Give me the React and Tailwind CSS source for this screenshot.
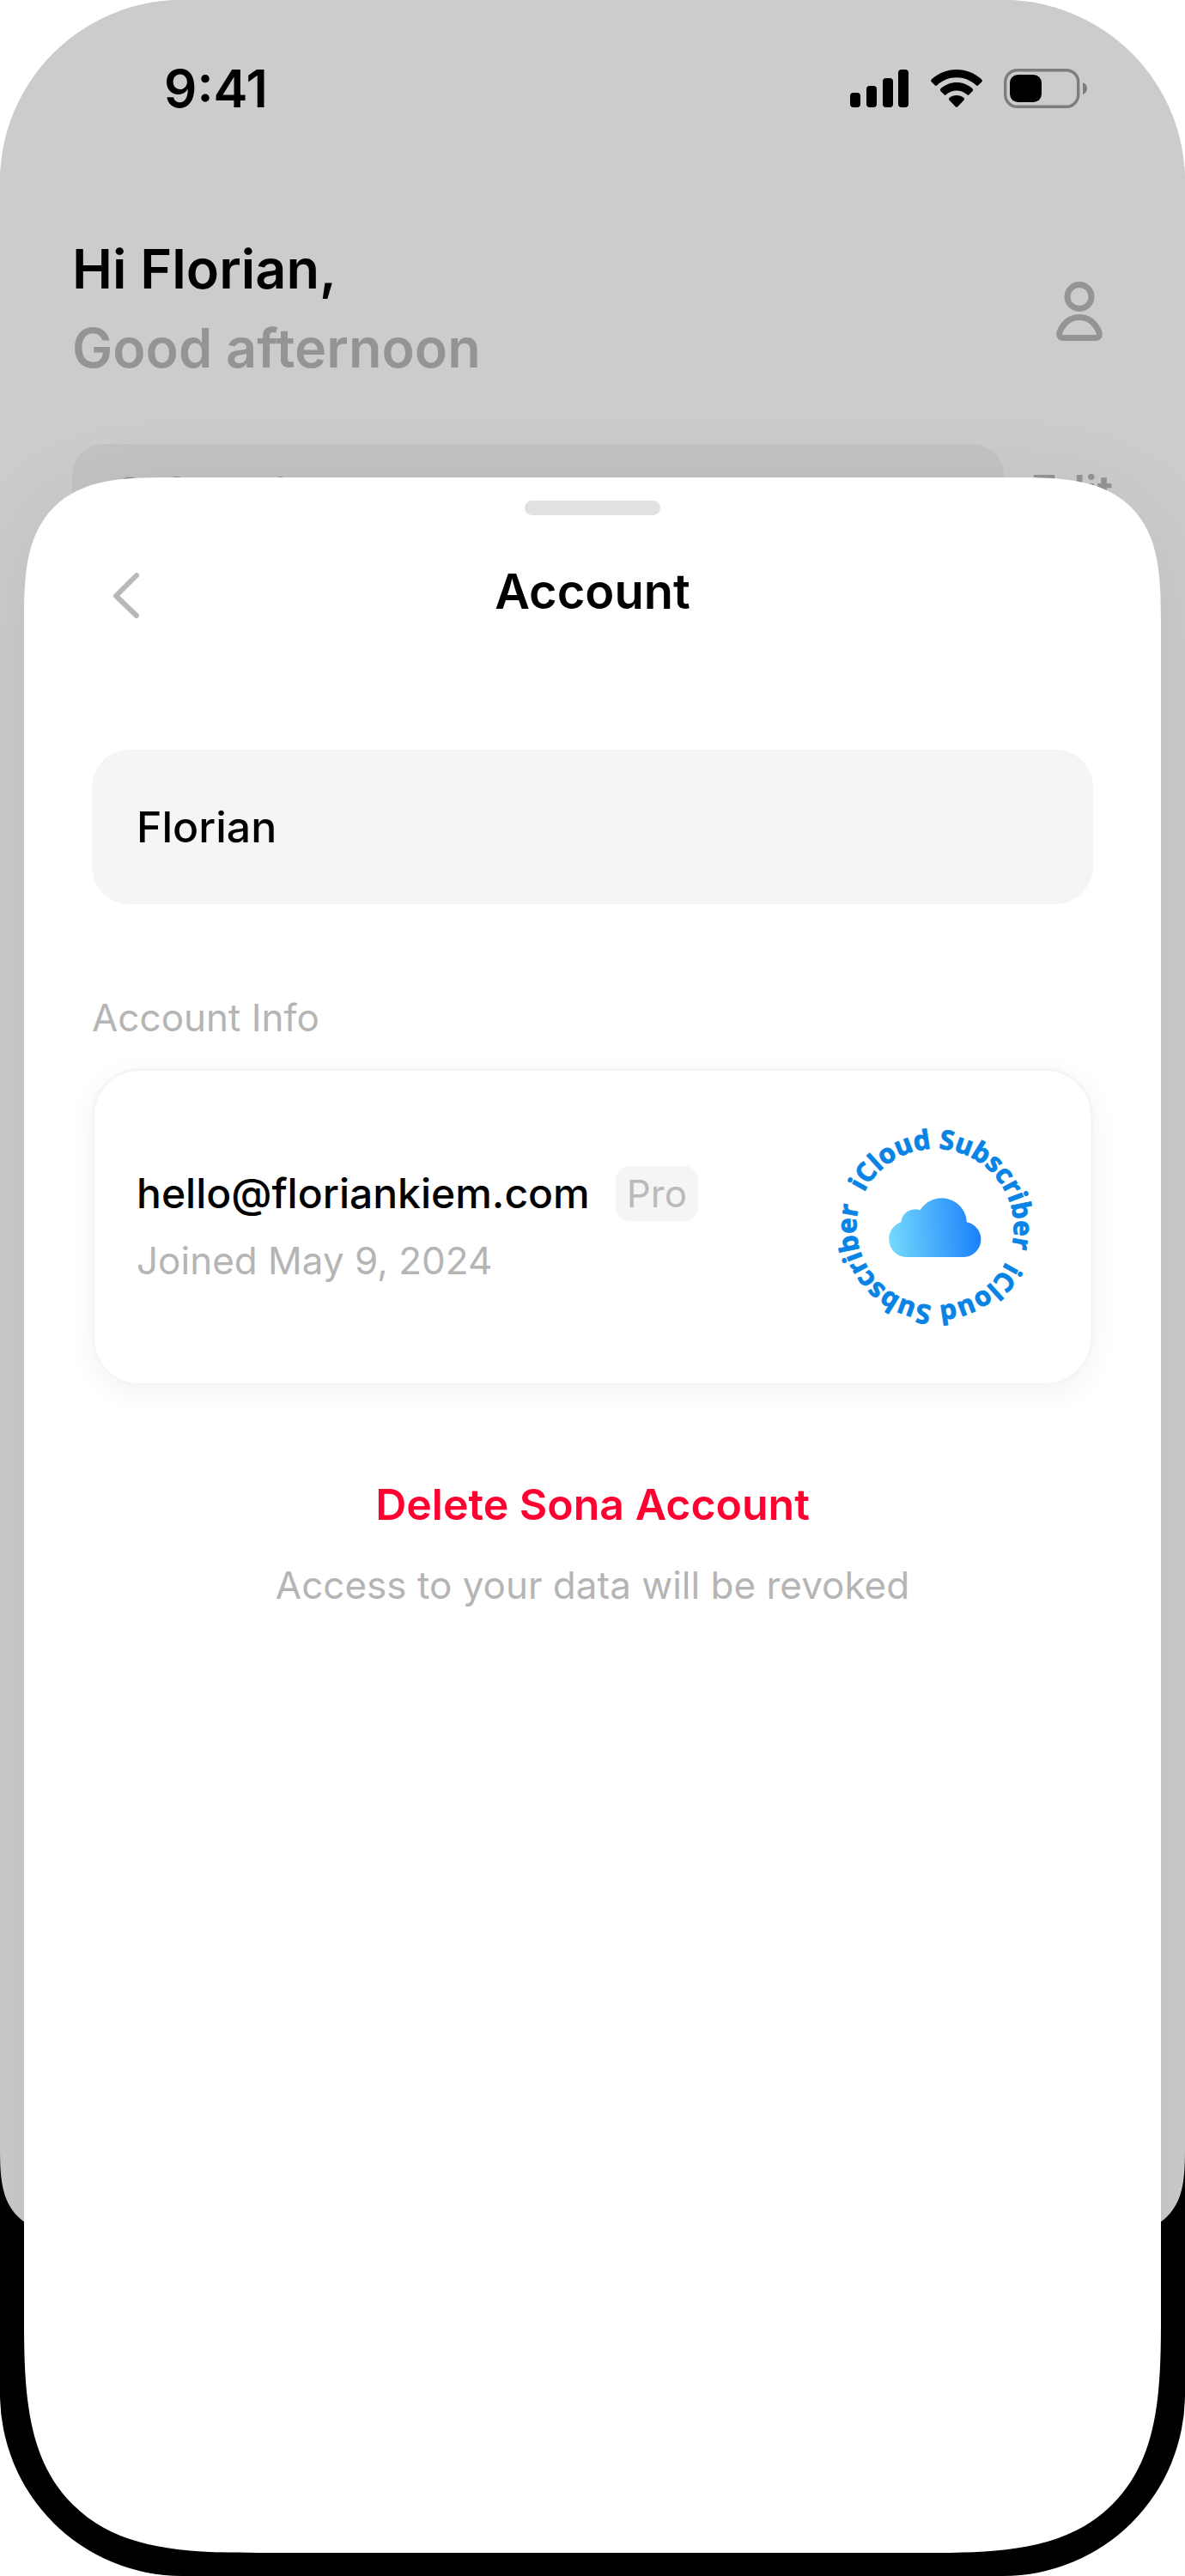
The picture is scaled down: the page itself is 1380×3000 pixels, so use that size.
import React from "react";

function SignalIcon() {
  return (
    <svg width="69" height="46" viewBox="0 0 69 46" aria-hidden="true">
      <rect x="0" y="28" width="12" height="17" rx="4" />
      <rect x="19" y="20" width="12" height="25" rx="4" />
      <rect x="38" y="11" width="12" height="34" rx="4" />
      <rect x="56" y="1" width="12" height="44" rx="4" />
    </svg>
  );
}

function WifiIcon() {
  return (
    <svg width="60" height="46" viewBox="0 0 60 46" aria-hidden="true">
      <path d="M30 1C41 1 51 5.200 59 12.200Q60.500 13.800 59.400 15.200L55 19.600Q54 20.400 53 19.500C46.500 13.500 38.500 10.300 30 10.300S13.500 13.500 7 19.500Q6 20.400 5 19.600L.6 15.200Q-.5 13.800 1 12.200C9 5.200 19 1 30 1Z" />
      <path d="M30 16C37 16 43.500 18.700 48.500 23.200Q49.800 24.600 48.700 25.900L44.500 30.300Q43.400 31.300 42.300 30.300C38.800 27.200 34.600 25.500 30 25.500S21.200 27.200 17.700 30.300Q16.600 31.300 15.500 30.300L11.300 25.900Q10.200 24.600 11.500 23.200C16.500 18.700 23 16 30 16Z" />
      <path d="M30 31C33.300 31 36.200 32.200 38.500 34.100Q39.600 35.200 38.600 36.400L31 44.400Q30 45.300 29 44.400L21.400 36.400Q20.400 35.200 21.500 34.100C23.800 32.200 26.700 31 30 31Z" />
    </svg>
  );
}

function BatteryIcon() {
  return (
    <svg width="98" height="46" viewBox="0 0 98 46" aria-hidden="true">
      <rect x="1.700" y="1.700" width="85" height="42.600" rx="14" fill="none" stroke="#7d7d7d" strokeWidth="3.400" />
      <rect x="7" y="7" width="37" height="32" rx="9.500" />
      <path d="M92 16C95.300 17.500 97 20 97 23S95.300 28.500 92 30Z" fill="#7d7d7d" />
    </svg>
  );
}

function PersonIcon() {
  return (
    <svg width="54" height="76" viewBox="0 0 54 76" fill="none" stroke="#949494" strokeWidth="7" aria-hidden="true">
      <circle cx="27" cy="24.500" r="14" />
      <path d="M27 48.500C38 48.500 45 55 49.500 64.500Q52 72.500 45.500 72.500H8.500Q2 72.500 4.500 64.500C9 55 16 48.500 27 48.500Z" />
    </svg>
  );
}

function SubscriberSeal() {
  return (
    <svg width="240" height="240" viewBox="0 0 240 240" className="overflow-visible" role="img" aria-label="iCloud Subscriber">
      <defs>
        <linearGradient id="cloud" gradientUnits="userSpaceOnUse" x1="65" y1="125" x2="174" y2="118">
          <stop offset="0" stopColor="#74dafc" />
          <stop offset="1" stopColor="#1a7ffb" />
        </linearGradient>
        <path id="arcTop" d="M37.300 79.700A92 92 0 0 1 202.700 160.300A92 92 0 0 1 37.300 79.700" />
        <path id="arcBottom" d="M202.700 160.300A92 92 0 0 1 37.300 79.700A92 92 0 0 1 202.700 160.300" />
      </defs>
      <g
        className="font-['Open_Sans'] text-[31px] font-bold"
        fill="#0a84e4"
        stroke="#0a84e4"
        strokeWidth="1"
        strokeLinejoin="round"
      >
        <text><textPath href="#arcTop">iCloud Subscriber</textPath></text>
        <text><textPath href="#arcBottom">iCloud Subscriber</textPath></text>
      </g>
      <path
        fill="url(#cloud)"
        d="M86 155A21 21 0 0 1 80.300 114.200A16.600 16.600 0 0 1 102.500 100.300A29.300 29.300 0 0 1 156.800 114.200A20.600 20.600 0 0 1 153.500 155Z"
      />
    </svg>
  );
}

function HomeScreen() {
  return (
    <div className="col-start-1 row-start-1 mb-[398px] overflow-hidden rounded-b-[80px] bg-[#cccccc] px-[84px] supports-[corner-shape:squircle]:rounded-b-[100px] supports-[corner-shape:squircle]:[corner-shape:superellipse(1.58)]">
      <div className="mt-[73px] flex h-[60px] items-center justify-between pr-[29px] pl-[107px]">
        <time className="text-[60px] leading-[60px] font-semibold">9:41</time>
        <div className="flex items-center gap-[25px]">
          <SignalIcon />
          <WifiIcon />
          <BatteryIcon />
        </div>
      </div>
      <header className="mt-[134px] flex items-center justify-between">
        <h1 className="text-[63px] leading-[92px] font-semibold">
          Hi Florian,
          <span className="block text-[#949494]">Good afternoon</span>
        </h1>
        <button type="button" aria-label="Profile" className="mr-[12px]">
          <PersonIcon />
        </button>
      </header>
      <div className="mt-[66px] flex items-center gap-[31px]">
        <label className="flex h-[112px] flex-1 items-center gap-[16px] rounded-[36px] bg-[#c3c3c3] pl-[52px]">
          <svg width="40" height="40" viewBox="0 0 40 40" fill="none" stroke="#8f8f8f" strokeWidth="5" aria-hidden="true">
            <circle cx="16" cy="17" r="13" />
            <path d="M26 27L37 38" strokeLinecap="round" />
          </svg>
          <input
            type="search"
            placeholder="Search"
            aria-label="Search"
            className="w-full bg-transparent text-[48px] leading-[60px] outline-none placeholder:text-[#8f8f8f]"
          />
        </label>
        <button type="button" className="text-[52px] leading-[60px] font-semibold text-[#949494]">
          Edit
        </button>
      </div>
    </div>
  );
}

function AccountSheet() {
  return (
    <section
      role="dialog"
      aria-labelledby="sheet-title"
      className="z-10 col-start-1 row-start-1 mx-7 mt-[556px] mb-[27px] flex flex-col rounded-t-[120px] rounded-b-[195px] bg-white px-[79px] shadow-[0_20px_110px_rgba(0,0,0,0.08)] supports-[corner-shape:squircle]:rounded-t-[168px] supports-[corner-shape:squircle]:rounded-b-[273px] supports-[corner-shape:squircle]:[corner-shape:superellipse(1.58)]"
    >
      <div className="mt-[27px] h-[17px] w-[158px] self-center rounded-full bg-[#e2e2e2]" />
      <header className="mt-[53px] grid grid-cols-[72px_1fr_72px] items-center">
        <button type="button" aria-label="Back">
          <svg width="72" height="72" viewBox="0 0 72 72" fill="none" stroke="#b8b8b8" strokeWidth="6" strokeLinecap="round" strokeLinejoin="round" aria-hidden="true">
            <path d="M52 17L28 41L52 64" />
          </svg>
        </button>
        <h2 id="sheet-title" className="text-center text-[56px] leading-[72px] font-semibold">
          Account
        </h2>
      </header>
      <input
        type="text"
        aria-label="Name"
        defaultValue="Florian"
        className="mt-[148px] h-[180px] w-full rounded-[44px] bg-[#f5f5f5] px-[52px] text-[50px] font-medium outline-none"
      />
      <h3 className="mt-[102px] text-[44px] leading-[60px] text-[#b5b5b5]">Account Info</h3>
      <div className="mt-[29px] flex items-center justify-between rounded-[56px] border-3 border-[#f5f5f5] bg-white py-[62px] pr-[61px] pl-[49px] shadow-[0_8px_32px_rgba(0,0,0,0.05)]">
        <div className="flex flex-col gap-[14px]">
          <div className="flex items-center gap-[30px]">
            <span className="text-[48px] leading-[64px] font-medium">hello@floriankiem.com</span>
            <span className="rounded-[16px] bg-[#f5f5f5] px-[13px] text-[44px] leading-[64px] text-[#bababa]">Pro</span>
          </div>
          <p className="text-[44px] leading-[64px] text-[#b5b5b5]">Joined May 9, 2024</p>
        </div>
        <SubscriberSeal />
      </div>
      <button type="button" className="mt-[106px] self-center text-[50px] leading-[64px] font-semibold text-[#ff0030]">
        Delete Sona Account
      </button>
      <p className="mt-[32px] text-center text-[44px] leading-[60px] text-[#b5b5b5]">Access to your data will be revoked</p>
    </section>
  );
}

export default function App() {
  return (
    <div className="min-h-screen bg-white">
      <main className="grid min-h-screen overflow-hidden rounded-[212px] bg-linear-to-b from-[#cccccc] from-50% to-black to-50% font-[Inter,sans-serif] text-black">
        <HomeScreen />
        <AccountSheet />
      </main>
    </div>
  );
}
